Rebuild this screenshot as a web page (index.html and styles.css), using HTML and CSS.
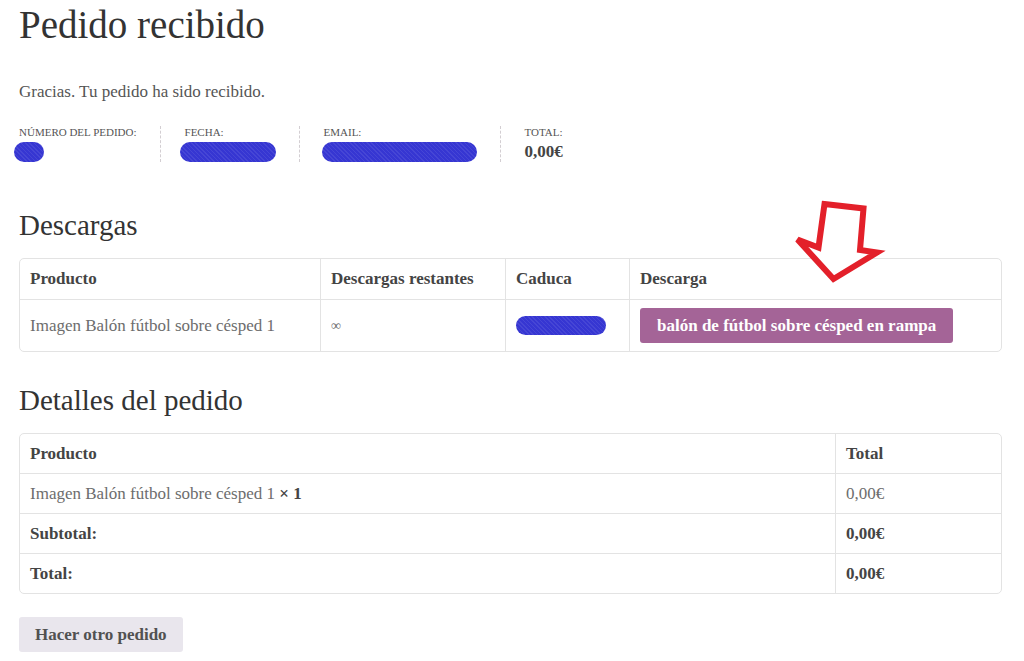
FILE: index.html
```html
<!DOCTYPE html>
<html lang="es">
<head>
    <meta charset="UTF-8">
    <meta name="viewport" content="width=device-width, initial-scale=1.0">
    <title>Pedido recibido</title>
    <link rel="stylesheet" href="styles.css">
</head>
<body>
    <div id="main-content">
        <h1>Pedido recibido</h1>

        <p class="thankyou">Gracias. Tu pedido ha sido recibido.</p>

        <!-- Resumen del pedido -->
        <ul class="order-overview">
            <li>
                <span class="ov-label">Número del pedido:</span>
                <span class="redacted redacted-dot"></span>
            </li>
            <li>
                <span class="ov-label">Fecha:</span>
                <span class="redacted redacted-date"></span>
            </li>
            <li>
                <span class="ov-label">Email:</span>
                <span class="redacted redacted-email"></span>
            </li>
            <li>
                <span class="ov-label">Total:</span>
                <strong class="ov-value">0,00€</strong>
            </li>
        </ul>

        <h2>Descargas</h2>
        <table class="shop-table downloads">
            <thead>
                <tr>
                    <th class="col-product">Producto</th>
                    <th class="col-remaining">Descargas restantes</th>
                    <th class="col-expires">Caduca</th>
                    <th>Descarga</th>
                </tr>
            </thead>
            <tbody>
                <tr>
                    <td>Imagen Balón fútbol sobre césped 1</td>
                    <td class="infinite">∞</td>
                    <td><span class="redacted redacted-expires"></span></td>
                    <td><a class="btn-download" href="#">balón de fútbol sobre césped en rampa</a></td>
                </tr>
            </tbody>
        </table>

        <h2>Detalles del pedido</h2>
        <table class="shop-table details">
            <thead>
                <tr>
                    <th>Producto</th>
                    <th class="col-total">Total</th>
                </tr>
            </thead>
            <tbody>
                <tr>
                    <td>Imagen Balón fútbol sobre césped 1 <strong class="qty">× 1</strong></td>
                    <td>0,00€</td>
                </tr>
            </tbody>
            <tfoot>
                <tr>
                    <th>Subtotal:</th>
                    <th>0,00€</th>
                </tr>
                <tr>
                    <th>Total:</th>
                    <th>0,00€</th>
                </tr>
            </tfoot>
        </table>

        <a class="btn-again" href="#">Hacer otro pedido</a>

        <!-- flecha roja señalando el boton de descarga -->
        <svg class="arrow" width="110" height="100" viewBox="0 0 110 100">
            <polygon points="44.5,14 83.5,18.5 80,60 97,62.5 53.5,89 17.5,49.5 38.5,57.5" fill="#fff" stroke="#e3202a" stroke-width="6" stroke-linejoin="miter" stroke-miterlimit="3"/>
        </svg>
    </div>
</body>
</html>
```

FILE: styles.css
```css
body {
    margin: 0;
    padding: 0;
    background-color: #fff;
    font-family: "Liberation Serif", "Times New Roman", serif;
    color: #6d6d6d;
}

#main-content {
    position: relative;
    padding: 0 22px 0 19px;
}

h1 {
    font-size: 39px;
    font-weight: normal;
    color: #333;
    margin: 0;
    padding-top: 3px;
    line-height: 44px;
}

h2 {
    font-size: 29px;
    font-weight: normal;
    color: #333;
    margin: 0 0 17px;
    line-height: 32px;
}

.thankyou {
    font-size: 17px;
    color: #555;
    margin: 35px 0 24px;
}

.order-overview {
    list-style: none;
    display: flex;
    margin: 0 0 47px;
    padding: 0;
}

.order-overview li {
    display: flex;
    flex-direction: column;
    gap: 4px;
    padding: 0 23px 0 24px;
    border-right: 1px dashed #d3ced2;
}

.order-overview li:first-child {
    padding-left: 0;
}

.order-overview li:last-child {
    border-right: none;
}

.ov-label {
    font-size: 11px;
    text-transform: uppercase;
    color: #555;
}

.ov-value {
    font-size: 17px;
    color: #444;
}

/* manchas azules que tapan los datos */
.redacted {
    display: block;
    height: 20px;
    border-radius: 10px;
    background-color: #3636d2;
    background-image: repeating-linear-gradient(45deg, rgba(255, 255, 255, 0.08) 0 1px, transparent 1px 3px);
}

.redacted-dot {
    width: 30px;
    margin-left: -5px;
}

.redacted-date {
    width: 96px;
    margin-left: -5px;
}

.redacted-email {
    width: 155px;
    margin-left: -2px;
}

.redacted-expires {
    width: 90px;
    height: 19px;
}

.arrow {
    position: absolute;
    left: 780px;
    top: 190px;
}

.shop-table {
    width: 100%;
    border: 1px solid #e3e3e3;
    border-radius: 5px;
    border-collapse: separate;
    border-spacing: 0;
    font-size: 17px;
    margin-bottom: 32px;
}

.shop-table th,
.shop-table td {
    text-align: left;
    padding: 0 10px;
    height: 40px;
    border-right: 1px solid #e3e3e3;
    border-top: 1px solid #e3e3e3;
}

.shop-table th:last-child,
.shop-table td:last-child {
    border-right: none;
}

.shop-table thead th {
    border-top: none;
}

.shop-table th {
    font-weight: bold;
    color: #444;
}

.downloads tbody td {
    height: 51px;
}

.details td,
.details th {
    height: 39px;
}

.col-product {
    width: 280px;
}

.col-remaining {
    width: 164px;
}

.col-expires {
    width: 103px;
}

.col-total {
    width: 145px;
}

.infinite {
    font-size: 14px;
}

.btn-download {
    display: inline-block;
    background-color: #a46497;
    color: #fff;
    font-weight: bold;
    text-decoration: none;
    padding: 0 17px;
    line-height: 35px;
    border-radius: 3px;
}

.qty {
    color: #444;
}

.btn-again {
    display: inline-block;
    margin-top: -12px;
    background-color: #e9e6ed;
    color: #515151;
    font-weight: bold;
    font-size: 17px;
    text-decoration: none;
    padding: 0 16px;
    line-height: 35px;
    border-radius: 3px;
}
```
